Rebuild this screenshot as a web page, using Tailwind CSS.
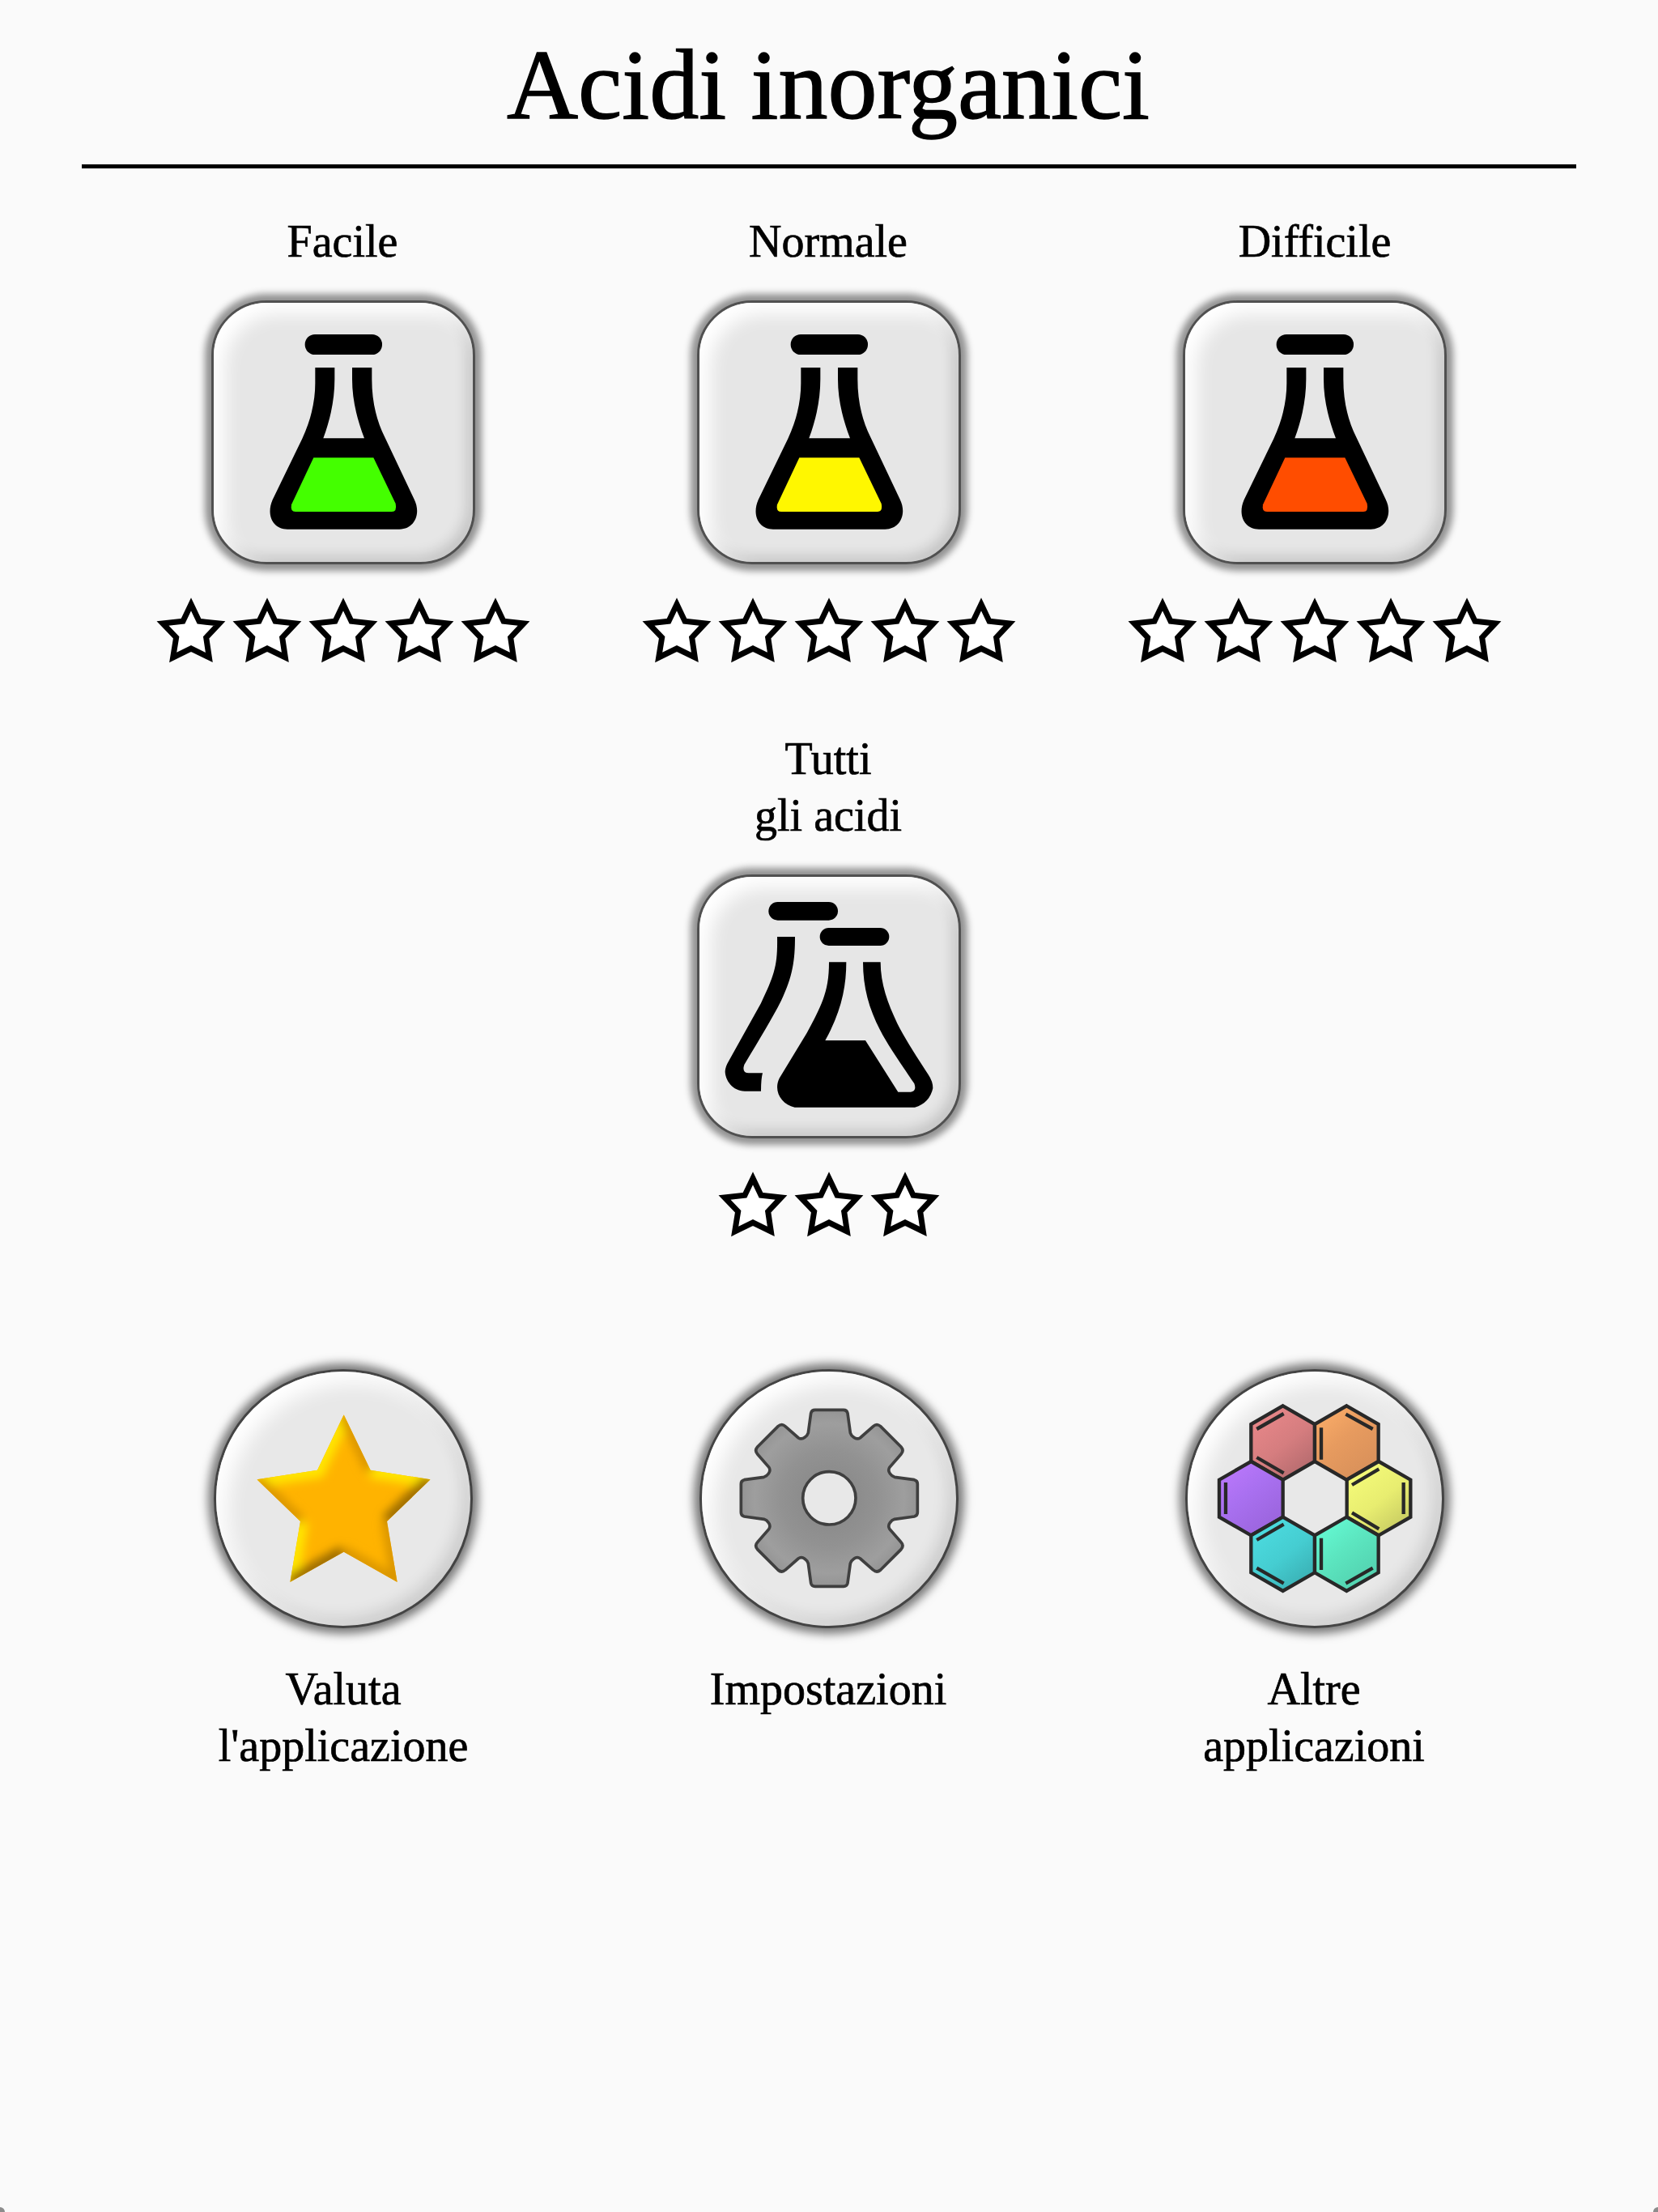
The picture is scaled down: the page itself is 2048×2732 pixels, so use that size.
<!DOCTYPE html>
<html lang="it">
<head>
    <meta charset="UTF-8">
    <meta name="viewport" content="width=device-width, initial-scale=1.0">
    <title>Acidi inorganici</title>
    <script src="https://cdn.jsdelivr.net/npm/@tailwindcss/browser@4"></script>
</head>
<body class="bg-[#fafafa] text-black font-['Liberation_Serif',serif] [-webkit-text-stroke:0.7px_#000]">
    <!-- Shared shapes -->
    <svg class="hidden">
        <symbol id="stella" viewBox="27 30 282 282">
            <path d="M168 79 L198 142 L273 150 L224 202 L235 276 L168 243 L101 276 L113 202 L63 150 L138 142Z" fill="#fff" stroke="#000" stroke-width="21"/>
        </symbol>
        <symbol id="beuta" viewBox="96 96 972 972">
            <rect x="440" y="219" width="286" height="75" rx="37"/>
            <path d="M478 342 H550 V385 C550 460 535 530 508 604 H660 C632 530 615 460 615 385 V342 H688 V385 C688 470 706 540 736 600 L845 830 C872 885 845 941 790 941 H375 C322 941 295 890 320 832 L430 605 C465 530 478 460 478 400Z"/>
            <path d="M472 676 H694 L776 846 Q782 876 762 876 H405 Q385 876 390 850Z" fill="currentColor"/>
        </symbol>
        <path id="esagono" d="M0 -137 L118 -69 V69 L0 137 L-118 69 V-69Z"/>
    </svg>

    <div class="relative w-[2048px] h-[2732px] overflow-hidden pt-[35px]">
        <h1 class="h-[140px] leading-[140px] text-[122px] text-center -ml-0.5 whitespace-nowrap [-webkit-text-stroke:1.4px_#000]">Acidi inorganici</h1>
        <div class="mt-7 ml-[101px] w-[1846px] h-[5px] bg-black"></div>

        <!-- Difficulty levels -->
        <div class="mt-[55px] ml-[124px] w-[1800px] grid grid-cols-3 justify-items-center text-[56px] leading-[70px] text-center">
            <div class="flex flex-col items-center">
                <p class="-ml-0.5">Facile</p>
                <button class="mt-[38px] w-[326px] h-[326px] rounded-[68px] border-3 border-[#505050] bg-[#e6e6e6] shadow-[0_0_9px_8px_rgba(0,0,0,0.42)] relative">
                    <span class="absolute inset-0 rounded-[65px] shadow-[inset_14px_14px_22px_#fff,inset_-7px_-7px_16px_rgba(0,0,0,0.15)]"></span>
                    <svg class="absolute -inset-[2px] w-[324px] h-[324px] text-[#44ff00]"><use href="#beuta"/></svg>
                </button>
                <div class="mt-[33px] flex">
                    <svg class="w-[94px] h-[94px]"><use href="#stella"/></svg>
                    <svg class="w-[94px] h-[94px]"><use href="#stella"/></svg>
                    <svg class="w-[94px] h-[94px]"><use href="#stella"/></svg>
                    <svg class="w-[94px] h-[94px]"><use href="#stella"/></svg>
                    <svg class="w-[94px] h-[94px]"><use href="#stella"/></svg>
                </div>
            </div>
            <div class="flex flex-col items-center">
                <p class="-ml-0.5">Normale</p>
                <button class="mt-[38px] w-[326px] h-[326px] rounded-[68px] border-3 border-[#505050] bg-[#e6e6e6] shadow-[0_0_9px_8px_rgba(0,0,0,0.42)] relative">
                    <span class="absolute inset-0 rounded-[65px] shadow-[inset_14px_14px_22px_#fff,inset_-7px_-7px_16px_rgba(0,0,0,0.15)]"></span>
                    <svg class="absolute -inset-[2px] w-[324px] h-[324px] text-[#fff700]"><use href="#beuta"/></svg>
                </button>
                <div class="mt-[33px] flex">
                    <svg class="w-[94px] h-[94px]"><use href="#stella"/></svg>
                    <svg class="w-[94px] h-[94px]"><use href="#stella"/></svg>
                    <svg class="w-[94px] h-[94px]"><use href="#stella"/></svg>
                    <svg class="w-[94px] h-[94px]"><use href="#stella"/></svg>
                    <svg class="w-[94px] h-[94px]"><use href="#stella"/></svg>
                </div>
            </div>
            <div class="flex flex-col items-center">
                <p>Difficile</p>
                <button class="mt-[38px] w-[326px] h-[326px] rounded-[68px] border-3 border-[#505050] bg-[#e6e6e6] shadow-[0_0_9px_8px_rgba(0,0,0,0.42)] relative">
                    <span class="absolute inset-0 rounded-[65px] shadow-[inset_14px_14px_22px_#fff,inset_-7px_-7px_16px_rgba(0,0,0,0.15)]"></span>
                    <svg class="absolute -inset-[2px] w-[324px] h-[324px] text-[#ff4d00]"><use href="#beuta"/></svg>
                </button>
                <div class="mt-[33px] flex">
                    <svg class="w-[94px] h-[94px]"><use href="#stella"/></svg>
                    <svg class="w-[94px] h-[94px]"><use href="#stella"/></svg>
                    <svg class="w-[94px] h-[94px]"><use href="#stella"/></svg>
                    <svg class="w-[94px] h-[94px]"><use href="#stella"/></svg>
                    <svg class="w-[94px] h-[94px]"><use href="#stella"/></svg>
                </div>
            </div>
        </div>

        <!-- All acids -->
        <div class="mt-[78px] flex flex-col items-center text-[56px] leading-[70px] text-center">
            <p class="-ml-0.5">Tutti<br>gli acidi</p>
            <button class="mt-[38px] w-[326px] h-[326px] rounded-[68px] border-3 border-[#505050] bg-[#e6e6e6] shadow-[0_0_9px_8px_rgba(0,0,0,0.42)] relative">
                <span class="absolute inset-0 rounded-[65px] shadow-[inset_14px_14px_22px_#fff,inset_-7px_-7px_16px_rgba(0,0,0,0.15)]"></span>
                <svg class="absolute -inset-[2px] w-[324px] h-[324px]" viewBox="96 96 972 972">
                    <rect x="358" y="195" width="257" height="68" rx="34"/>
                    <rect x="548" y="291" width="257" height="66" rx="33"/>
                    <path d="M390 324 H456 C456 410 448 470 405 560 C370 630 320 710 268 798 Q258 829 285 829 H336 Q330 850 330 896 H270 C225 896 197 855 197 822 Q198 805 210 785 L330 570 C380 465 392 430 390 324Z"/>
                    <path d="M582 418 H646 C646 510 628 600 568 708 H717 L838 899 H885 Q908 897 898 868 C880 840 830 770 795 712 C740 620 708 530 708 418 H773 C773 500 800 570 835 645 C865 705 905 765 950 835 Q967 860 967 885 Q955 940 900 956 H455 C405 945 375 895 398 848 L500 680 C560 570 582 520 582 418Z"/>
                </svg>
            </button>
            <div class="mt-[33px] flex">
                <svg class="w-[94px] h-[94px]"><use href="#stella"/></svg>
                <svg class="w-[94px] h-[94px]"><use href="#stella"/></svg>
                <svg class="w-[94px] h-[94px]"><use href="#stella"/></svg>
            </div>
        </div>

        <!-- Bottom menu -->
        <div class="mt-[158px] ml-[124px] w-[1800px] grid grid-cols-3 justify-items-center text-[56px] leading-[70px] text-center">
            <div class="flex flex-col items-center">
                <button class="w-[320px] h-[320px] rounded-full border-3 border-[#444] bg-[#e8e8e8] shadow-[0_0_12px_7px_rgba(0,0,0,0.52)] relative">
                    <span class="absolute inset-0 rounded-full shadow-[inset_14px_14px_24px_#fff,inset_-8px_-8px_20px_rgba(0,0,0,0.13)]"></span>
                    <svg class="absolute -inset-[3px] w-[320px] h-[320px]" viewBox="72 93 960 960">
                        <defs>
                            <clipPath id="bordoStella"><path d="M554 262 L653 467 L875 502 L714 657 L752 882 L554 770 L355 882 L393 657 L232 502 L456 467Z"/></clipPath>
                            <filter id="sfuma" x="-20%" y="-20%" width="140%" height="140%"><feGaussianBlur stdDeviation="18"/></filter>
                        </defs>
                        <g clip-path="url(#bordoStella)">
                            <rect x="220" y="250" width="670" height="650" fill="#ffb300"/>
                            <g fill="none" filter="url(#sfuma)">
                                <path d="M554 262 L456 467 L232 502 M393 657 L355 882 M653 467 L875 502" stroke="#ffe600" stroke-width="58"/>
                                <path d="M875 502 L714 657 M554 770 L355 882" stroke="#9a6a00" stroke-width="50"/>
                                <path d="M554 262 L653 467 M714 657 L752 882 L554 770 M232 502 L393 657" stroke="#d89400" stroke-width="42"/>
                            </g>
                        </g>
                    </svg>
                </button>
                <p class="mt-10">Valuta<br>l'applicazione</p>
            </div>
            <div class="flex flex-col items-center">
                <button class="w-[320px] h-[320px] rounded-full border-3 border-[#444] bg-[#e8e8e8] shadow-[0_0_12px_7px_rgba(0,0,0,0.52)] relative">
                    <span class="absolute inset-0 rounded-full shadow-[inset_14px_14px_24px_#fff,inset_-8px_-8px_20px_rgba(0,0,0,0.13)]"></span>
                    <svg class="absolute -inset-[3px] w-[320px] h-[320px]" viewBox="72 93 960 960">
                        <defs>
                            <radialGradient id="metallo" gradientUnits="userSpaceOnUse" cx="0" cy="0" r="327">
                                <stop offset="0.3" stop-color="#8c8c8c"/>
                                <stop offset="0.55" stop-color="#929292"/>
                                <stop offset="0.85" stop-color="#9e9e9e"/>
                                <stop offset="1" stop-color="#949494"/>
                            </radialGradient>
                        </defs>
                        <g transform="translate(553 571)" stroke="#3f3f3f" stroke-width="11">
                            <path fill="url(#metallo)" d="M-53 -327 H53 Q65 -327 68 -315 L78 -242 Q81 -232 91 -225 Q103 -216 115 -224 L163 -266 Q176 -278 190 -266 L266 -190 Q278 -176 266 -163 L224 -115 Q216 -103 225 -91 Q232 -81 242 -78 L315 -68 Q327 -65 327 -53
                                V53 Q327 65 315 68 L242 78 Q232 81 225 91 Q216 103 224 115 L266 163 Q278 176 266 190 L190 266 Q176 278 163 266 L115 224 Q103 216 91 225 Q81 232 78 242 L68 315 Q65 327 53 327
                                H-53 Q-65 327 -68 315 L-78 242 Q-81 232 -91 225 Q-103 216 -115 224 L-163 266 Q-176 278 -190 266 L-266 190 Q-278 176 -266 163 L-224 115 Q-216 103 -225 91 Q-232 81 -242 78 L-315 68 Q-327 65 -327 53
                                V-53 Q-327 -65 -315 -68 L-242 -78 Q-232 -81 -225 -91 Q-216 -103 -224 -115 L-266 -163 Q-278 -176 -266 -190 L-190 -266 Q-176 -278 -163 -266 L-115 -224 Q-103 -216 -91 -225 Q-81 -232 -78 -242 L-68 -315 Q-65 -327 -53 -327Z"/>
                            <circle r="98" fill="#e8e8e8"/>
                        </g>
                    </svg>
                </button>
                <p class="mt-10 -ml-0.5">Impostazioni</p>
            </div>
            <div class="flex flex-col items-center">
                <button class="w-[320px] h-[320px] rounded-full border-3 border-[#444] bg-[#e8e8e8] shadow-[0_0_12px_7px_rgba(0,0,0,0.52)] relative">
                    <span class="absolute inset-0 rounded-full shadow-[inset_14px_14px_24px_#fff,inset_-8px_-8px_20px_rgba(0,0,0,0.13)]"></span>
                    <svg class="absolute -inset-[3px] w-[320px] h-[320px]" viewBox="72 93 960 960">
                        <defs>
                            <linearGradient id="rosso" x2="0.7" y2="1"><stop stop-color="#ed8a8c"/><stop offset="0.6" stop-color="#d57d7f"/><stop offset="1" stop-color="#b56b6e"/></linearGradient>
                            <linearGradient id="arancio" x2="0.7" y2="1"><stop stop-color="#ffb06a"/><stop offset="0.5" stop-color="#e79b5f"/><stop offset="1" stop-color="#d8905a"/></linearGradient>
                            <linearGradient id="viola" x2="0.7" y2="1"><stop stop-color="#c07aff"/><stop offset="0.5" stop-color="#a970f0"/><stop offset="1" stop-color="#9a64dc"/></linearGradient>
                            <linearGradient id="giallo" x2="0.7" y2="1"><stop stop-color="#f8ff7c"/><stop offset="0.6" stop-color="#e8ed70"/><stop offset="1" stop-color="#c8cc62"/></linearGradient>
                            <linearGradient id="ciano" x2="0.7" y2="1"><stop stop-color="#4ee0e4"/><stop offset="0.6" stop-color="#45cdd1"/><stop offset="1" stop-color="#3ab0b4"/></linearGradient>
                            <linearGradient id="verde" x2="0.7" y2="1"><stop stop-color="#66ffd8"/><stop offset="0.5" stop-color="#5ce6c0"/><stop offset="1" stop-color="#52d0ae"/></linearGradient>
                        </defs>
                        <g stroke="#282828" stroke-width="13">
                            <use href="#esagono" x="434" y="366" fill="url(#rosso)"/>
                            <use href="#esagono" x="670" y="366" fill="url(#arancio)"/>
                            <use href="#esagono" x="316" y="572" fill="url(#viola)"/>
                            <use href="#esagono" x="789" y="572" fill="url(#giallo)"/>
                            <use href="#esagono" x="434" y="778" fill="url(#ciano)"/>
                            <use href="#esagono" x="670" y="778" fill="url(#verde)"/>
                            <path d="M337 315 L437 258 M337 420 L437 478 M667 260 L767 315 M576 310 V428 M222 513 V630 M690 522 L790 463 M881 513 V630 M690 625 L790 685 M337 726 L437 668 M337 830 L437 887 M576 719 V837 M667 887 L767 830"/>
                        </g>
                    </svg>
                </button>
                <p class="mt-10 -ml-0.5">Altre<br>applicazioni</p>
            </div>
        </div>

        <!-- Rounded screen corners -->
        <div class="absolute left-0 bottom-0 w-[6px] h-[6px] bg-[#8c8c8c] rounded-tr-full"></div>
        <div class="absolute right-0 bottom-0 w-[6px] h-[6px] bg-[#8c8c8c] rounded-tl-full"></div>
    </div>
</body>
</html>
